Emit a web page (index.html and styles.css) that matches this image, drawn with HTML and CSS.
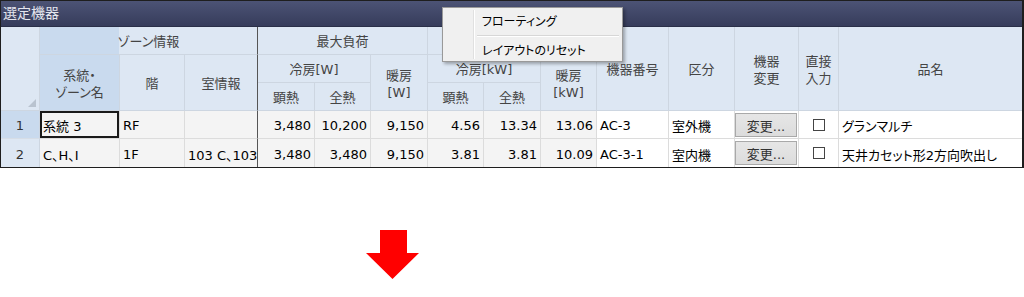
FILE: index.html
```html
<!DOCTYPE html>
<html lang="ja">
<head>
<meta charset="UTF-8" />
<title>選定機器</title>
<link rel="stylesheet" href="styles.css">
</head>
<body>
  <div class="panel">
    <div class="title">選定機器</div>

    <div class="grid">
      <!-- ヘッダー -->
      <div class="hd corner"><span class="tri"></span></div>
      <div class="hd h-zone">ゾーン情報</div>
      <div class="hd sel h-name">系統・<br>ゾーン名</div>
      <div class="hd h-floor">階</div>
      <div class="hd h-room frozen">室情報</div>
      <div class="hd h-load">最大負荷</div>
      <div class="hd h-coolw">冷房[W]</div>
      <div class="hd h-heatw">暖房<br>[W]</div>
      <div class="hd h-s1">顕熱</div>
      <div class="hd h-t1">全熱</div>
      <div class="hd h-cap"></div>
      <div class="hd h-coolkw">冷房[kW]</div>
      <div class="hd h-heatkw">暖房<br>[kW]</div>
      <div class="hd h-s2">顕熱</div>
      <div class="hd h-t2">全熱</div>
      <div class="hd h-no">機器番号</div>
      <div class="hd h-kind">区分</div>
      <div class="hd h-chg">機器<br>変更</div>
      <div class="hd h-direct">直接<br>入力</div>
      <div class="hd h-prod last-col">品名</div>

      <!-- 1行目 -->
      <div class="rh active">1</div>
      <div class="cell ro selected">系統 3</div>
      <div class="cell ro">RF</div>
      <div class="cell ro frozen"></div>
      <div class="cell ro num">3,480</div>
      <div class="cell ro num">10,200</div>
      <div class="cell ro num">9,150</div>
      <div class="cell ro num">4.56</div>
      <div class="cell ro num">13.34</div>
      <div class="cell ro num">13.06</div>
      <div class="cell">AC-3</div>
      <div class="cell">室外機</div>
      <div class="cell center"><span class="btn">変更...</span></div>
      <div class="cell center"><span class="check"></span></div>
      <div class="cell last-col">グランマルチ</div>

      <!-- 2行目 -->
      <div class="rh last-row">2</div>
      <div class="cell ro last-row">C、H、I</div>
      <div class="cell ro last-row">1F</div>
      <div class="cell ro frozen last-row">103 C、103 D</div>
      <div class="cell ro num last-row">3,480</div>
      <div class="cell ro num last-row">3,480</div>
      <div class="cell ro num last-row">9,150</div>
      <div class="cell ro num last-row">3.81</div>
      <div class="cell ro num last-row">3.81</div>
      <div class="cell ro num last-row">10.09</div>
      <div class="cell last-row">AC-3-1</div>
      <div class="cell last-row">室内機</div>
      <div class="cell center last-row"><span class="btn">変更...</span></div>
      <div class="cell center last-row"><span class="check"></span></div>
      <div class="cell last-col last-row">天井カセット形2方向吹出し</div>
    </div>

    <div class="menu">
      <div class="menu-item">フローティング</div>
      <div class="menu-sep"></div>
      <div class="menu-item">レイアウトのリセット</div>
    </div>
  </div>

  <div class="arrow">
    <svg width="53" height="50" viewBox="0 0 53 50">
      <polygon points="14,0 41,0 41,23 53,23 26.5,49 0,23 14,23" fill="#ff0000" />
    </svg>
  </div>
</body>
</html>
```

FILE: styles.css
```css
body {
  margin: 0;
  background: #fff;
  font-family: "DejaVu Sans", "Noto Sans CJK JP", sans-serif;
  font-size: 13px;
  font-feature-settings: "palt";
  color: #000;
}

.panel {
  position: relative;
  width: 1024px;
  box-sizing: border-box;
  border: 1px solid #1e1e1e;
  border-right-width: 2px;
}

.title {
  height: 26px;
  box-sizing: border-box;
  padding: 3px 2px 0;
  background: linear-gradient(#4c5375, #363c5b);
  border-bottom: 1px solid #2a2f48;
  color: #e4e6ee;
  font-size: 14px;
  line-height: 18px;
}

.grid {
  display: grid;
  grid-template-columns: 39px 80px 65px 73px 57px 56px 57px 56px 57px 56px 72px 66px 64px 40px 183px;
  grid-template-rows: repeat(5, 28px);
}

/* ヘッダー */
.hd {
  display: flex;
  align-items: center;
  justify-content: center;
  text-align: center;
  line-height: 17px;
  padding-top: 2px;
  box-sizing: border-box;
  background: #dde7f3;
  color: #444;
  border-right: 1px solid #cdd6e1;
  border-bottom: 1px solid #cdd6e1;
}
.hd.sel { background: #c9daee; }

.corner {
  grid-column: 1;
  grid-row: 1 / 4;
  align-items: flex-end;
  justify-content: flex-end;
  padding: 0 3px 3px 0;
}
.tri {
  width: 8px;
  height: 8px;
  background: #b9c3cf;
  clip-path: polygon(100% 0, 100% 100%, 0 100%);
}

.h-zone {
  grid-column: 2 / 5;
  grid-row: 1;
  background: linear-gradient(to right, #c9daee 79px, #dde7f3 79px);
}
.h-name { grid-column: 2; grid-row: 2 / 4; }
.h-floor { grid-column: 3; grid-row: 2 / 4; }
.h-room { grid-column: 4; grid-row: 2 / 4; }
.h-load { grid-column: 5 / 8; grid-row: 1; }
.h-coolw { grid-column: 5 / 7; grid-row: 2; }
.h-heatw { grid-column: 7; grid-row: 2 / 4; }
.h-s1 { grid-column: 5; grid-row: 3; }
.h-t1 { grid-column: 6; grid-row: 3; }
.h-cap { grid-column: 8 / 11; grid-row: 1; }
.h-coolkw { grid-column: 8 / 10; grid-row: 2; }
.h-heatkw { grid-column: 10; grid-row: 2 / 4; }
.h-s2 { grid-column: 8; grid-row: 3; }
.h-t2 { grid-column: 9; grid-row: 3; }
.h-no { grid-column: 11; grid-row: 1 / 4; }
.h-kind { grid-column: 12; grid-row: 1 / 4; }
.h-chg { grid-column: 13; grid-row: 1 / 4; }
.h-direct { grid-column: 14; grid-row: 1 / 4; }
.h-prod { grid-column: 15; grid-row: 1 / 4; }

.h-zone, .frozen { border-right: 1px solid #555; }

/* 行ヘッダー */
.rh {
  display: flex;
  align-items: center;
  justify-content: center;
  padding-top: 2px;
  box-sizing: border-box;
  background: #dde7f3;
  color: #333;
  border-right: 1px solid #cdd6e1;
  border-bottom: 1px solid #d6dde6;
}
.rh.active { background: #c9daee; }

/* データ */
.cell {
  display: flex;
  align-items: center;
  padding: 2px 3px 0;
  box-sizing: border-box;
  white-space: nowrap;
  overflow: hidden;
  background: #fff;
  border-right: 1px solid #dcdcdc;
  border-bottom: 1px solid #dcdcdc;
}
.cell.ro { background: #f4f4f4; }
.cell.num { justify-content: flex-end; }
.cell.center { justify-content: center; padding: 0; }
.cell.frozen { border-right: 1px solid #555; }
.cell.selected { box-shadow: inset 0 0 0 2px #1a1a1a; }

.last-row { border-bottom: none; }
.last-col { border-right: none; }

.btn {
  display: flex;
  align-items: center;
  justify-content: center;
  width: 62px;
  height: 24px;
  box-sizing: border-box;
  margin-left: -1px;
  padding-top: 1px;
  background: linear-gradient(#e6e6e6, #dcdcdc);
  border: 1px solid #a9a9a9;
  color: #333;
}

.check {
  width: 12px;
  height: 12px;
  box-sizing: border-box;
  background: #fff;
  border: 1px solid #444;
}

/* コンテキストメニュー */
.menu {
  position: absolute;
  left: 441px;
  top: 6px;
  width: 181px;
  height: 55px;
  box-sizing: border-box;
  padding: 2px 2px 2px 33px;
  background: #f0f0f0;
  border: 1px solid #999;
  box-shadow: 2px 2px 3px rgb(0 0 0 / 0.3);
  font-size: 12px;
}
.menu::before {
  content: "";
  position: absolute;
  left: 30px;
  top: 2px;
  bottom: 2px;
  border-left: 1px solid #e0e0e0;
  border-right: 1px solid #fff;
}
.menu-item {
  height: 24px;
  line-height: 24px;
  padding-left: 6px;
}
.menu-sep {
  height: 1px;
  margin: 1px 1px 2px 1px;
  background: #d7d7d7;
  border-bottom: 1px solid #fff;
}

.arrow {
  margin: 62px 0 0 366px;
  line-height: 0;
}
```
